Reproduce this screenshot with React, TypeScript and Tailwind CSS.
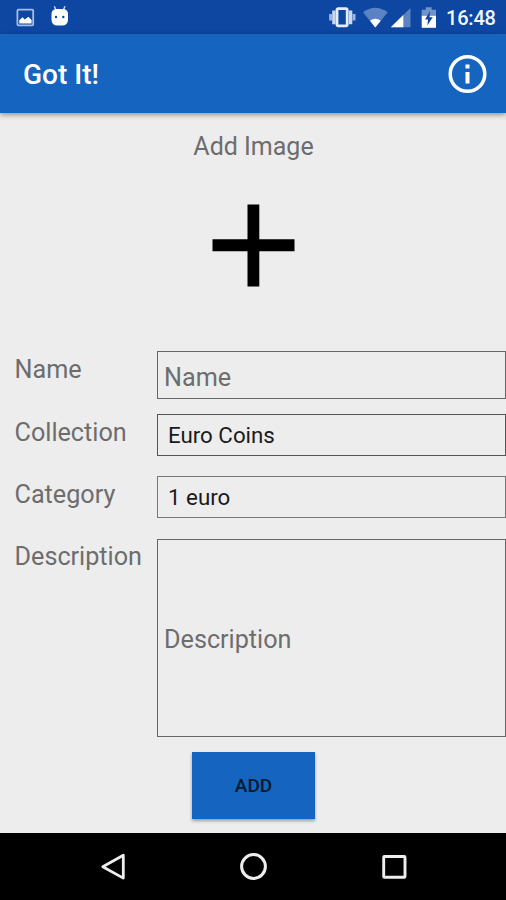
import React from 'react';

function StatusBar() {
  return (
    <div className="flex h-[34px] items-start bg-[#0d47a1]">
      <svg className="ml-[16px] h-[34px] w-[19px]" viewBox="16 0 19 34">
        <rect x="17.4" y="9.7" width="15.8" height="15.6" rx="1" fill="none" stroke="#a9bde0" strokeWidth="1.8" />
        <path d="M19.3 23.6v-3.4l3.2-3 2.3 2.4 3.6-2.9 3.2 3.2v3.7z" fill="#fff" />
      </svg>
      <svg className="ml-[15px] h-[34px] w-[20px]" viewBox="50 0 20 34">
        <path d="M54.3 6.2l1.8 4M65 6.2l-1.8 4" stroke="#cfdcf3" strokeWidth="1.4" />
        <path d="M55.500 9h8.500q4 1 4 5v5.500q0 6-6 6h-4.500q-6 0-6-6V14q0-4 4-5z" fill="#fff" />
        <circle cx="56" cy="17" r="1.200" fill="#0d47a1" />
        <circle cx="63.300" cy="17" r="1.200" fill="#0d47a1" />
      </svg>
      <svg className="ml-auto h-[34px] w-[28px]" viewBox="328 0 28 34">
        <rect x="337" y="8.600" width="10.200" height="17.200" rx="1.200" fill="none" stroke="#e6edfa" strokeWidth="2.800" />
        <path d="M333.900 10.500v13.800M350.600 10.500v13.800" stroke="#cbd7ef" strokeWidth="3.400" />
        <path d="M330.600 14v6.500M354 14v6.500" stroke="#9db3de" strokeWidth="3" />
      </svg>
      <svg className="ml-[6px] h-[34px] w-[26px]" viewBox="362 0 26 34">
        <path d="M363 12.300Q375.300 3 387.700 12.300L375.300 27.500z" fill="#5b83c4" />
        <path d="M370 20.700Q375.300 16.700 380.800 20.700L375.300 27.500z" fill="#fff" />
      </svg>
      <svg className="ml-[2px] h-[34px] w-[22px]" viewBox="390 0 22 34">
        <path d="M410.500 8v19.300H390.800z" fill="#5b83c4" />
        <path d="M403.300 15v12.300H390.800z" fill="#fff" />
      </svg>
      <svg className="ml-[8px] h-[34px] w-[18px]" viewBox="420 0 18 34">
        <path d="M425.700 7.300h6v2.500h4.300v7h-14.300v-7h4z" fill="#6f92cb" />
        <path d="M421.700 15.800H436v12h-14.300z" fill="#fff" />
        <path d="M429.800 11.200l-4.700 8.300h3l-.8 6 5.500-8.300h-3.200z" fill="#0d47a1" />
      </svg>
      <span className="ml-[8px] mr-[10px] w-[50px] whitespace-nowrap text-[20px] font-medium leading-[37px] tracking-[-0.2px] text-[#f4f7ff]">16:48</span>
    </div>
  );
}

function AppBar() {
  return (
    <header className="flex h-[79px] items-center justify-between bg-[#1565c0] pl-[23px] pr-[18px] shadow-[0_2px_5px_rgba(0,0,0,0.38)]">
      <h1 className="pt-[2px] text-[28px] font-medium leading-[32px] text-white">Got It!</h1>
      <svg className="h-[40px] w-[40px]" viewBox="0 0 40 40" aria-label="Info">
        <circle cx="19.500" cy="20" r="17.300" fill="none" stroke="#fff" strokeWidth="3.500" />
        <path d="M17.500 10.500h4v4h-4zM17.500 18h4v11.500h-4z" fill="#fff" />
      </svg>
    </header>
  );
}

const label = 'w-[157px] shrink-0 pl-[14.5px] text-[25.2px] leading-[30px] text-[#6d6d6d]';

function App() {
  return (
    <div className="flex h-[900px] w-[506px] flex-col overflow-hidden bg-[#ededed] font-['Roboto','Liberation_Sans',sans-serif]">
      <StatusBar />
      <AppBar />
      <main className="flex h-[720px] flex-col">
        <h2 className="mt-[18px] h-[30px] pl-px text-center text-[25px] leading-[32px] text-[#6d6d6d]">Add Image</h2>
        <svg className="mx-auto mt-[43px] h-[83px] w-[83px]" viewBox="0 0 83 83" aria-label="Add image">
          <path d="M35.500 0.500h11.800v82H35.500zM0.500 35.300h82v12H0.500z" fill="#000" />
        </svg>
        <div className="mt-[64px] flex h-[48px] items-start">
          <span className={label + ' mt-[4px]'}>Name</span>
          <div className="flex h-[48px] flex-1 items-center border border-[#666] pl-[6px] pt-[5px] text-[25.2px] text-[#6d6d6d]">Name</div>
        </div>
        <div className="mt-[15px] flex h-[42px] items-start">
          <span className={label + ' mt-[4px]'}>Collection</span>
          <div className="flex h-[42px] flex-1 items-center border border-[#555] pl-[10px] pt-[2px] text-[22.3px] text-[#1a1a1a]">Euro Coins</div>
        </div>
        <div className="mt-[20px] flex h-[42px] items-start">
          <span className={label + ' mt-[4px]'}>Category</span>
          <div className="flex h-[42px] flex-1 items-center border border-[#777] pl-[10px] pt-[2px] text-[22.3px] text-[#1a1a1a]">1 euro</div>
        </div>
        <div className="mt-[21px] flex h-[198px] items-start">
          <span className={label + ' mt-[3px]'}>Description</span>
          <div className="flex h-[198px] flex-1 items-center border border-[#666] pl-[6px] pt-[3px] text-[25.2px] text-[#6d6d6d]">Description</div>
        </div>
        <button className="mx-auto mt-[15px] h-[67px] w-[123px] bg-[#1565c0] pl-px pt-[2px] text-[19px] font-medium text-[#07192e] shadow-[0_2px_3px_rgba(0,0,0,0.35)]">ADD</button>
      </main>
      <nav className="flex h-[67px] items-start bg-black pt-[18px]">
        <svg className="ml-[100px] h-[30px] w-[26px]" viewBox="100 851 26 30">
          <path d="M123.300 855.300v22.800L102.800 866.700z" fill="none" stroke="#eee" strokeWidth="2.800" strokeLinejoin="round" />
        </svg>
        <svg className="ml-[112px] h-[30px] w-[30px]" viewBox="238 851 30 30">
          <circle cx="253.500" cy="866.500" r="11.900" fill="none" stroke="#eee" strokeWidth="3" />
        </svg>
        <svg className="ml-[112px] h-[30px] w-[28px]" viewBox="380 851 28 30">
          <rect x="383.700" y="856.500" width="21.300" height="20.800" rx="0.800" fill="none" stroke="#eee" strokeWidth="2.900" />
        </svg>
      </nav>
    </div>
  );
}

export default App;
